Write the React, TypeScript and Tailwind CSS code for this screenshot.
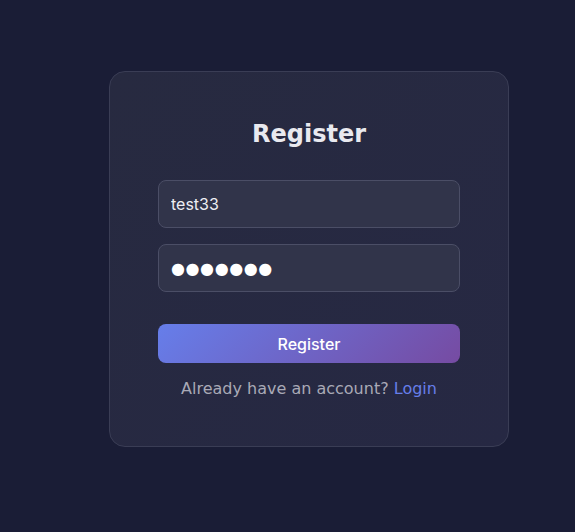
import { useState } from 'react';

export default function App() {
  const [username, setUsername] = useState('test33');

  return (
    <div className="min-h-[532px] bg-[#1a1d36] pl-[109px] pt-[71px] font-['DejaVu_Sans',sans-serif]">
      <div className="w-[400px] rounded-2xl border border-[#3a3d55] bg-gradient-to-br from-[#272a40] to-[#262843] p-12">
        <h2 className="mb-8 text-center text-2xl leading-[28px] font-bold text-[#e9e9ef]">Register</h2>
        <div className="flex flex-col gap-4">
          <input
            value={username}
            onChange={(e) => setUsername(e.target.value)}
            className="h-12 w-full rounded-lg border border-[#4b4e66] bg-[#31344a] px-3 font-['Inter',sans-serif] text-base text-[#eeeef3] outline-none"
          />
          {/* masked password shown with large discs like the browser renders it */}
          <input
            readOnly
            value="●●●●●●●"
            className="h-12 w-full rounded-lg border border-[#4b4e66] bg-[#31344a] px-3 font-['DejaVu_Sans',sans-serif] text-base tracking-[0.6px] text-white outline-none"
          />
        </div>
        <button className="mt-8 h-[39px] w-full rounded-lg bg-[linear-gradient(135deg,#667eea,#764ba2)] font-['Inter',sans-serif] text-base font-medium text-white">
          Register
        </button>
        <p className="mt-4 text-center text-base leading-[19px] text-[#a9a9b6]">
          Already have an account? <a className="text-[#667eea]">Login</a>
        </p>
      </div>
    </div>
  );
}
